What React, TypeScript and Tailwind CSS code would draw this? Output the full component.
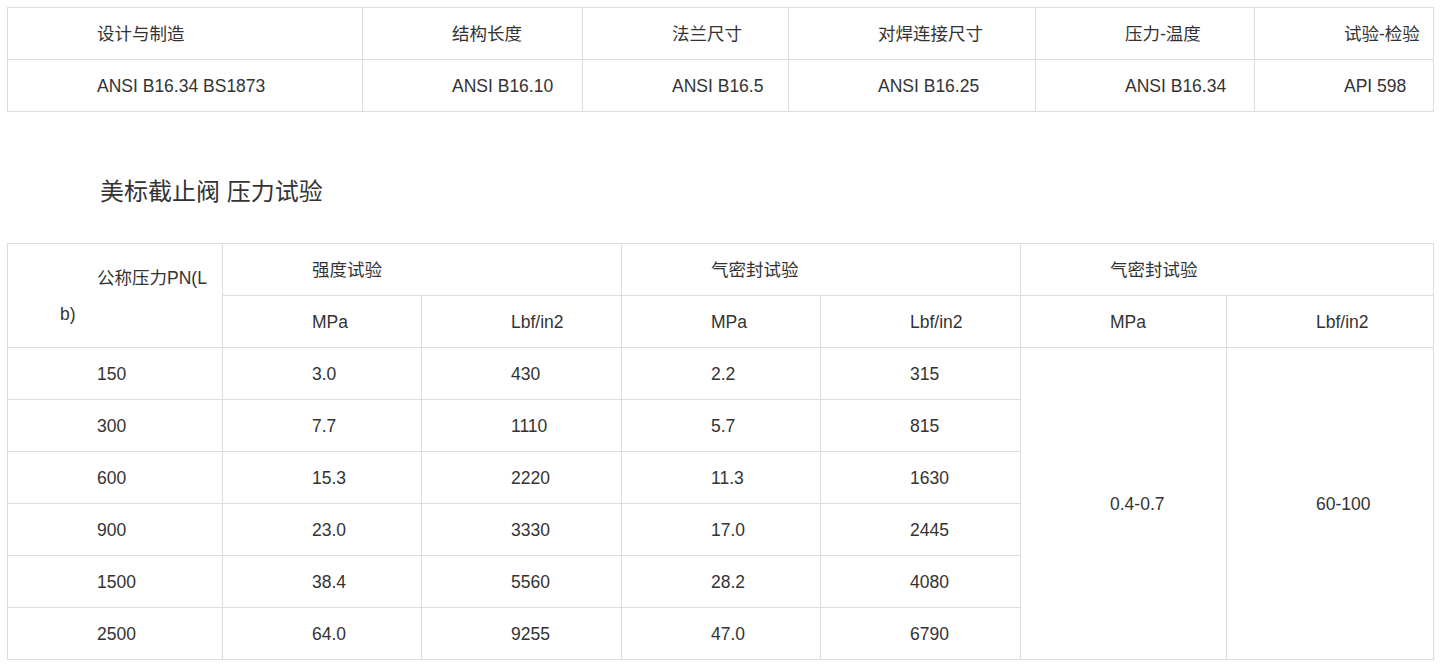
import React from 'react';

const specHead = ['设计与制造', '结构长度', '法兰尺寸', '对焊连接尺寸', '压力-温度', '试验-检验'];
const specBody = ['ANSI B16.34 BS1873', 'ANSI B16.10', 'ANSI B16.5', 'ANSI B16.25', 'ANSI B16.34', 'API 598'];
const specWidths = ['w-[355px]', 'w-[220px]', 'w-[206px]', 'w-[247px]', 'w-[219px]', 'w-[179px]'];

const rows = [
  ['150', '3.0', '430', '2.2', '315'],
  ['300', '7.7', '1110', '5.7', '815'],
  ['600', '15.3', '2220', '11.3', '1630'],
  ['900', '23.0', '3330', '17.0', '2445'],
  ['1500', '38.4', '5560', '28.2', '4080'],
  ['2500', '64.0', '9255', '47.0', '6790'],
];

const cell = 'border border-[#dddddd] h-[52px] pl-[89px] pr-2 text-left align-middle font-normal';

const App: React.FC = () => {
  return (
    <div
      className="bg-white min-h-[670px] px-[7px] pt-[7px] text-[#333333] text-[17.5px] leading-[24px]"
      style={{ fontFamily: '"Liberation Sans", Arial, "Noto Sans CJK SC", sans-serif' }}
    >
      <table className="w-[1426px] border-collapse table-fixed">
        <colgroup>
          {specWidths.map((w, i) => (
            <col key={i} className={w} />
          ))}
        </colgroup>
        <tbody>
          <tr>
            {specHead.map((h) => (
              <td key={h} className={cell}>
                {h}
              </td>
            ))}
          </tr>
          <tr>
            {specBody.map((b, i) => (
              <td key={i} className={cell}>
                {b}
              </td>
            ))}
          </tr>
        </tbody>
      </table>

      <div className="pt-[66px] h-[131px]">
        <h2 className="pl-[93px] text-[24px] leading-[28px] font-normal text-[#333333]">美标截止阀 压力试验</h2>
      </div>

      <table className="w-[1426px] border-collapse table-fixed">
        <colgroup>
          <col className="w-[215px]" />
          <col className="w-[199px]" />
          <col className="w-[200px]" />
          <col className="w-[199px]" />
          <col className="w-[200px]" />
          <col className="w-[206px]" />
          <col className="w-[207px]" />
        </colgroup>
        <tbody>
          <tr>
            <td rowSpan={2} className="border border-[#dddddd] text-left align-middle leading-[36px]">
              <span className="block pl-[89px]">公称压力PN(L</span>
              <span className="block pl-[52px]">b)</span>
            </td>
            <td colSpan={2} className={cell}>强度试验</td>
            <td colSpan={2} className={cell}>气密封试验</td>
            <td colSpan={2} className={cell}>气密封试验</td>
          </tr>
          <tr>
            <td className={cell}>MPa</td>
            <td className={cell}>Lbf/in2</td>
            <td className={cell}>MPa</td>
            <td className={cell}>Lbf/in2</td>
            <td className={cell}>MPa</td>
            <td className={cell}>Lbf/in2</td>
          </tr>
          {rows.map((r, i) => (
            <tr key={r[0]}>
              {r.map((v, j) => (
                <td key={j} className={cell}>
                  {v}
                </td>
              ))}
              {i === 0 && (
                <>
                  <td rowSpan={6} className={cell}>0.4-0.7</td>
                  <td rowSpan={6} className={cell}>60-100</td>
                </>
              )}
            </tr>
          ))}
        </tbody>
      </table>
    </div>
  );
};

export default App;
